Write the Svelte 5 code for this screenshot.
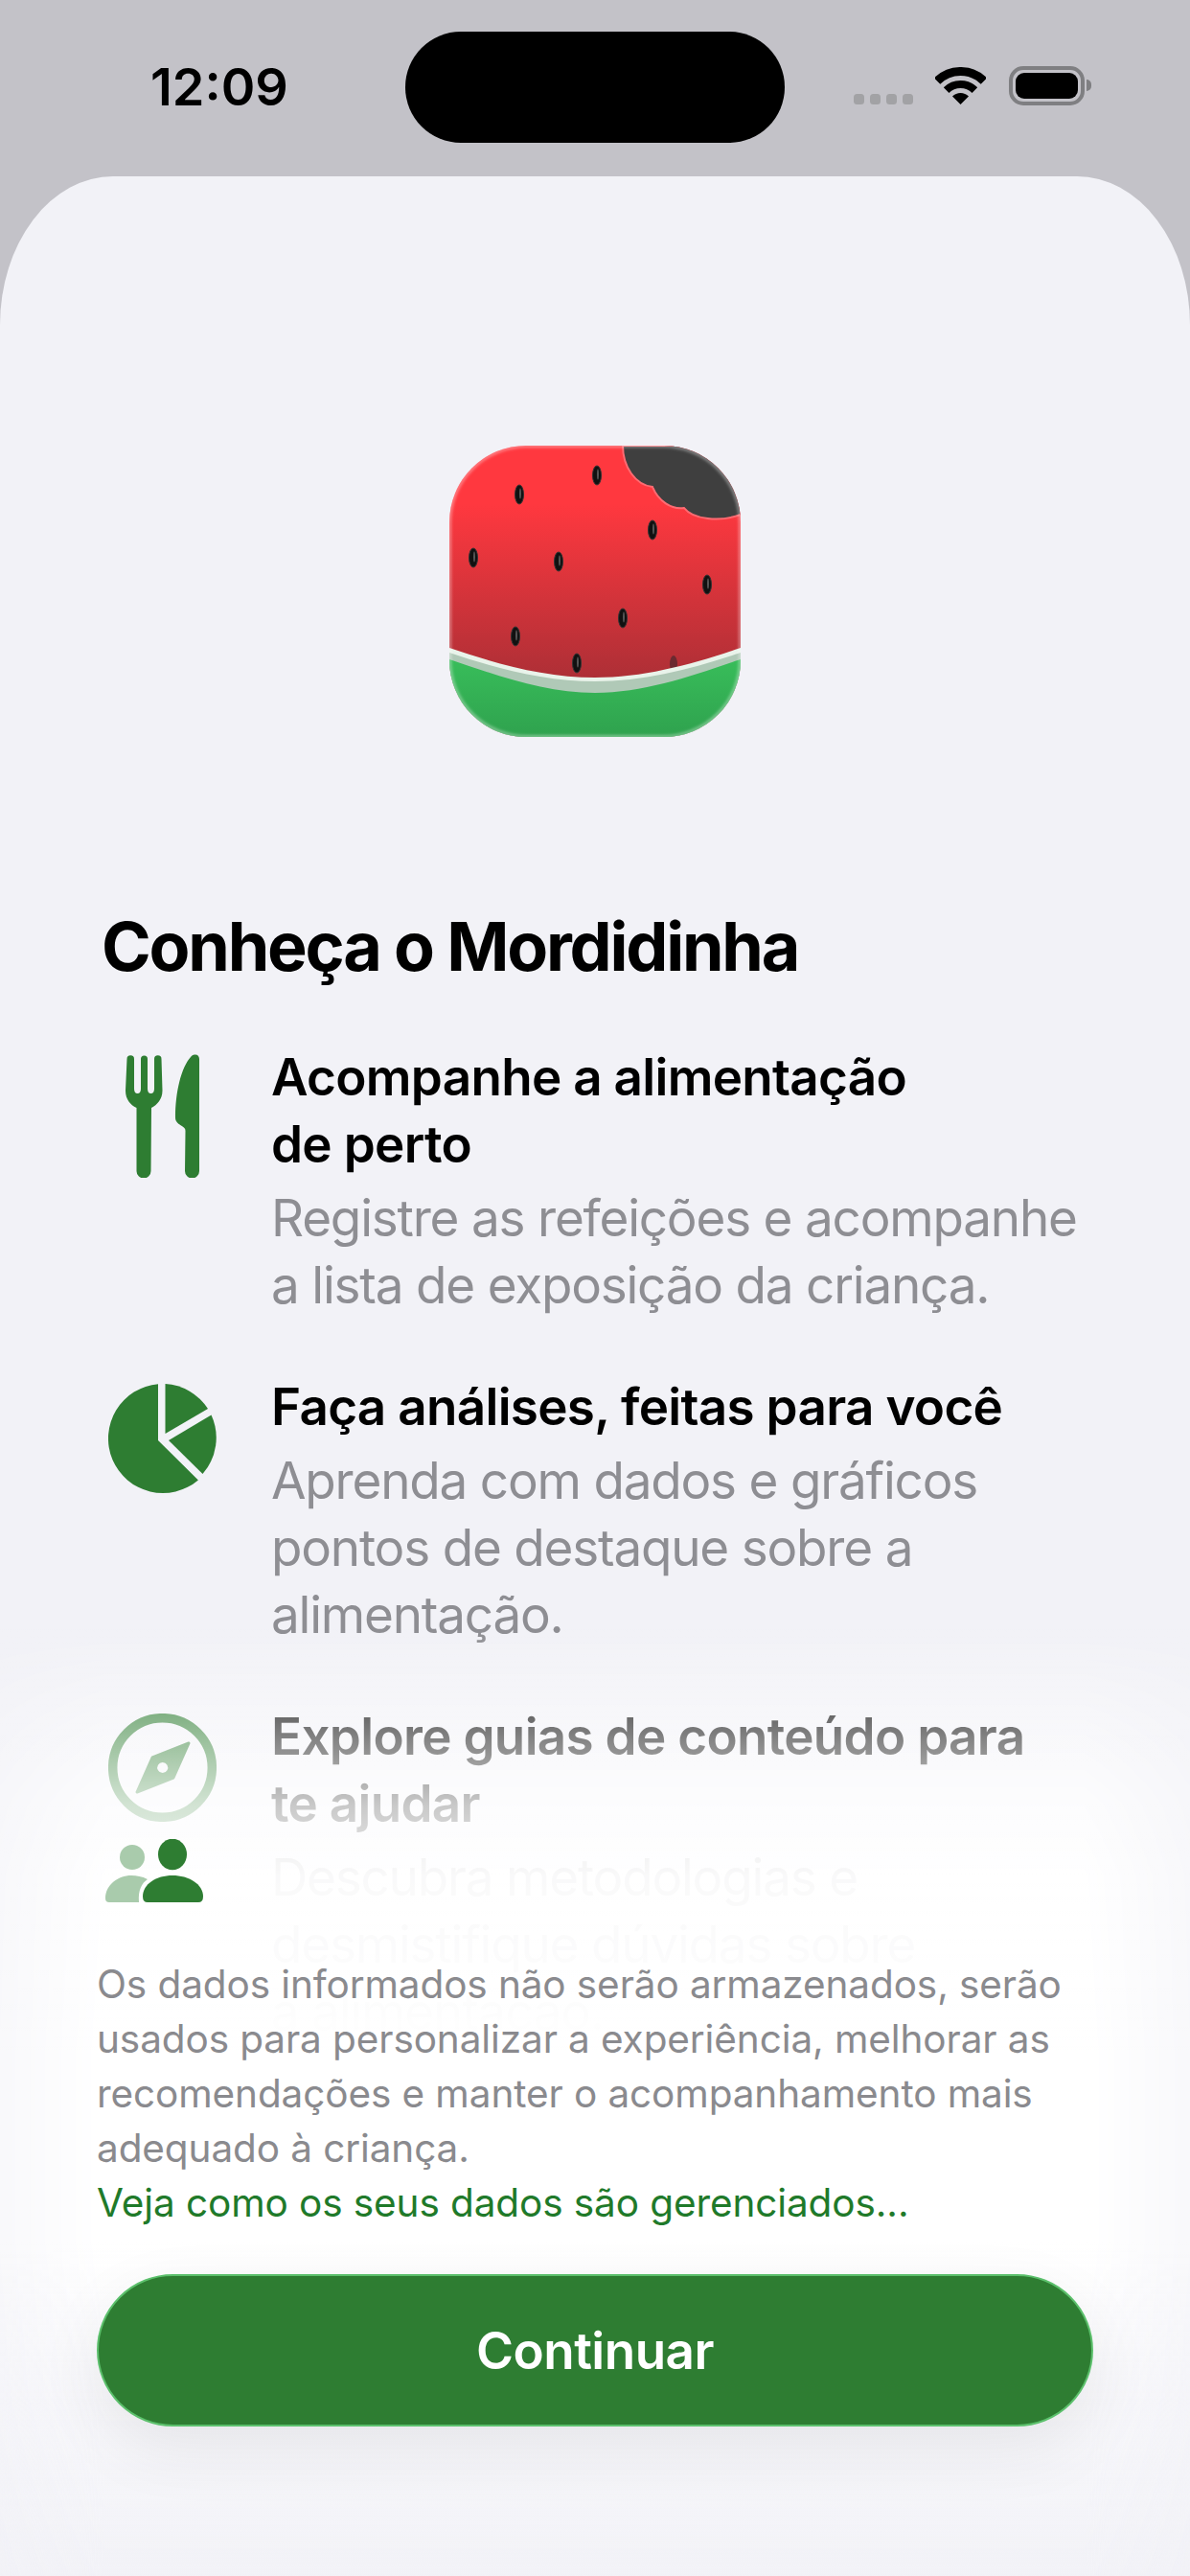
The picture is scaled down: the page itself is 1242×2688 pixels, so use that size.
<script>
  const seeds = [[154,31],[73,51],[212,88],[25,117],[114,121],[269,145],[181,180],[69,199],[133,227]];
</script>

<div class="page">
  <header class="status">
    <span class="time">12:09</span>
    <div class="sys">
      <div class="dots"><i></i><i></i><i></i><i></i></div>
      <svg class="wifi" viewBox="0 0 53 39" width="53" height="39">
        <path d="M2.1 14.6A34.5 34.5 0 0 1 50.9 14.6" fill="none" stroke="#000" stroke-width="9"/>
        <path d="M11.65 24.15A21 21 0 0 1 41.35 24.15" fill="none" stroke="#000" stroke-width="8"/>
        <path d="M26.5 39L18 30.5A12 12 0 0 1 35 30.5Z" fill="#000"/>
      </svg>
      <div class="battery"><div class="cell"></div></div>
      <div class="cap"></div>
    </div>
  </header>
  <div class="island"></div>

  <main class="sheet">
    <svg class="appicon" viewBox="0 0 304 304" width="304" height="304">
      <defs>
        <linearGradient id="red" x1="0" y1="0" x2="0" y2="1"><stop offset="0.2" stop-color="#ff383f"/><stop offset="0.8" stop-color="#ad2f36"/></linearGradient>
        <linearGradient id="grn" x1="0" y1="0" x2="0" y2="1"><stop offset="0" stop-color="#38bd5a"/><stop offset="1" stop-color="#2fa24e"/></linearGradient>
        <clipPath id="sq"><rect width="304" height="304" rx="80"/></clipPath>
        <filter id="soft" x="-10%" y="-10%" width="120%" height="120%"><feGaussianBlur stdDeviation="1.6"/></filter>
      </defs>
      <g clip-path="url(#sq)">
        <rect width="304" height="304" fill="url(#red)"/>
        <path d="M181 0C181 22 194 41 212 43C218 58 232 67 245 65C254 77 282 80 304 72V0Z" fill="#3f3f3f" stroke="#ff6b72" stroke-width="2"/>
        {#each seeds as [x, y]}
          <ellipse cx={x} cy={y} rx="4.5" ry="10" fill="#111" stroke="#333" stroke-width="1"/>
          <ellipse cx={x + 1} cy={y - 1} rx="1" ry="5.5" fill="#555"/>
        {/each}
        <ellipse cx="234" cy="228" rx="4" ry="9" fill="#6b2a30"/>
        <path d="M0 211C50 228 100 242 152 242C204 242 254 228 304 211V304H0Z" fill="#e9f3ea"/>
        <path d="M0 216C50 233 100 246 152 246C204 246 254 233 304 216V304H0Z" fill="#b0c9b7"/>
        <path d="M0 223C50 240 100 258 152 258C204 258 254 240 304 223V304H0Z" fill="url(#grn)"/>
        <rect x="0.5" y="0.5" width="303" height="303" rx="80" fill="none" stroke="#fff" stroke-opacity="0.4" stroke-width="3" filter="url(#soft)"/>
      </g>
    </svg>

    <h1>Conheça o Mordidinha</h1>

    <section class="list">
      <article class="row">
        <div class="icons">
          <svg viewBox="0 0 77 129" width="77" height="129">
            <path class="g" d="M1.5 5a3.75 3.75 0 0 1 7.5 0L9 36q0 5 3.5 5t3.5-5L16 5a3.5 3.5 0 0 1 7 0L23 36q0 5 3.5 5t3.5-5L30 5a3.75 3.75 0 0 1 7.5 0L38.5 38C38.5 47 33 53 27 56L26.5 122a7.5 7.5 0 0 1-15 0L11.5 56C5 53 0 47 0 38Z"/>
            <path class="g" d="M72 .5C75 0 77 2 77 5L77 122a7.5 7.5 0 0 1-15 0L62.5 80C62.5 77 61 76.5 58 74.5C54 72 52 70 52 66C52 40 58 14 68 3C69 1.5 70.5 .8 72 .5Z"/>
          </svg>
        </div>
        <div class="copy">
          <h2>Acompanhe a alimentação<br>de perto</h2>
          <p>Registre as refeições e acompanhe<br>a lista de exposição da criança.</p>
        </div>
      </article>

      <article class="row">
        <div class="icons">
          <svg viewBox="0 0 114 114" width="114" height="114">
            <path class="g" d="M52 .2L52 59L93.9 100.4A57 57 0 1 1 52 .2Z"/>
            <path class="g" d="M59.5 0L59.5 52L104 26A57 57 0 0 0 59.5 0Z"/>
            <path class="g" d="M107.5 32.5L63 59L98.5 94A57 57 0 0 0 107.5 32.5Z"/>
          </svg>
        </div>
        <div class="copy">
          <h2>Faça análises, feitas para você</h2>
          <p>Aprenda com dados e gráficos<br>pontos de destaque sobre a<br>alimentação.</p>
        </div>
      </article>

      <article class="row">
        <div class="icons">
          <svg viewBox="0 0 113 113" width="113" height="113">
            <circle cx="56.5" cy="56.5" r="51.8" fill="none" stroke="#2e7d32" stroke-width="9.5"/>
            <path class="g" stroke="#2e7d32" stroke-width="3" stroke-linejoin="round" fill-rule="evenodd" d="M84 31L68 67L30 82L46 46ZM56.7 49.5a7 7 0 1 0 .01 0Z"/>
          </svg>
          <svg class="people" viewBox="0 0 102 67" width="102" height="67">
            <circle cx="28" cy="19" r="13" fill="#a9cbac"/>
            <path fill="#a9cbac" d="M0 62C0 48 13 38 27 38C33 38 38 39 44 42C38 46 34 53 35 66H4Q0 66 0 62Z"/>
            <ellipse class="g" cx="70" cy="16" rx="15" ry="16.3"/>
            <path class="g" d="M39 60C39 47 53 38 70 38C87 38 102 47 102 60Q102 66 97 66H44Q39 66 39 60Z"/>
          </svg>
        </div>
        <div class="copy">
          <h2>Explore guias de conteúdo para<br>te ajudar</h2>
          <p>Descubra metodologias e<br>desmistifique dúvidas sobre<br>a alimentação.</p>
        </div>
      </article>
    </section>
  </main>

  <div class="fade"></div>

  <footer class="foot">
    <p class="note">Os dados informados não serão armazenados, serão usados para personalizar a experiência, melhorar as recomendações e manter o acompanhamento mais adequado à criança.<br><span class="link">Veja como os seus dados são gerenciados...</span></p>
    <button class="cta">Continuar</button>
  </footer>
</div>

<style>
  :global(body) { margin: 0; }
  .page {
    position: relative;
    width: 1242px;
    height: 2688px;
    overflow: hidden;
    display: flex;
    flex-direction: column;
    background: #c3c2c8;
    font-family: Inter, "Liberation Sans", sans-serif;
  }
  .status {
    height: 184px;
    flex: none;
    box-sizing: border-box;
    padding: 0 103px 0 157px;
    display: flex;
    justify-content: space-between;
    align-items: flex-start;
  }
  .time {
    margin-top: 59px;
    font-size: 54px;
    line-height: 64px;
    font-weight: 600;
    color: #000;
    letter-spacing: 0;
  }
  .sys { display: flex; align-items: flex-start; margin-top: 69px; }
  .dots { display: flex; gap: 6px; margin-top: 29px; margin-right: 23px; }
  .dots i { width: 11px; height: 11px; border-radius: 3.5px; background: #a2a2a5; }
  .wifi { margin-top: 1px; margin-right: 24px; }
  .battery {
    width: 79px;
    height: 41px;
    box-sizing: border-box;
    border: 4px solid #7f7f82;
    border-radius: 15px;
    padding: 3px;
  }
  .cell { width: 100%; height: 100%; background: #000; border-radius: 9px; }
  .cap { width: 5px; height: 12px; margin: 14px 0 0 2px; background: #7f7f82; border-radius: 0 6px 6px 0; }
  .island {
    position: absolute;
    left: 423px;
    top: 33px;
    width: 396px;
    height: 116px;
    border-radius: 58px;
    background: #000;
  }
  .sheet {
    flex: 1;
    min-height: 0;
    background: #f2f2f7;
    border-radius: 118px 118px 0 0 / 155px 155px 0 0;
    display: flex;
    flex-direction: column;
    box-sizing: border-box;
    padding: 281px 90px 0 106px;
  }
  .appicon { align-self: flex-start; margin-left: 363px; flex: none; }
  h1 {
    margin: 177px 0 0;
    font-size: 70px;
    line-height: 84px;
    font-weight: 700;
    color: #000;
    letter-spacing: -2.2px;
  }
  .list { display: flex; flex-direction: column; gap: 57px; margin-top: 59px; }
  .row { display: grid; grid-template-columns: 127px 1fr; column-gap: 50px; }
  .icons {
    padding-top: 11px;
    display: flex;
    flex-direction: column;
    align-items: center;
    gap: 18px;
  }
  .icons svg { display: block; }
  .people { position: relative; z-index: 3; margin-right: 17px; }
  .g { fill: #2e7d32; }
  h2 {
    margin: 0;
    font-size: 53px;
    line-height: 70px;
    font-weight: 600;
    color: #000;
    letter-spacing: -0.7px;
    white-space: nowrap;
  }
  .copy p {
    margin: 7px 0 0;
    font-size: 53px;
    line-height: 70px;
    font-weight: 400;
    color: #8e8e93;
    letter-spacing: -1.2px;
    white-space: nowrap;
  }
  .fade {
    position: absolute;
    z-index: 2;
    left: 0;
    right: 0;
    top: 1700px;
    bottom: 0;
    background: linear-gradient(to bottom,
      rgba(255,255,255,0) 0,
      rgba(255,255,255,.5) 111px,
      rgba(255,255,255,.78) 181px,
      rgba(255,255,255,.95) 258px,
      rgba(255,255,255,.97) 330px,
      rgba(255,255,255,.985) 400px,
      #fff 440px,
      #fff 640px,
      rgba(248,248,251,.9) 800px,
      rgba(242,242,247,.6) 988px);
    -webkit-mask-image: linear-gradient(to right, rgba(0,0,0,.5), #000 110px, #000 1132px, rgba(0,0,0,.5));
    mask-image: linear-gradient(to right, rgba(0,0,0,.5), #000 110px, #000 1132px, rgba(0,0,0,.5));
  }
  .foot {
    position: absolute;
    z-index: 4;
    left: 101px;
    right: 101px;
    top: 2042px;
    display: flex;
    flex-direction: column;
  }
  .note {
    margin: 0;
    font-size: 40.5px;
    line-height: 57px;
    color: #8a8a8e;
    letter-spacing: -0.1px;
  }
  .link { color: #1f7a2a; }
  .cta {
    margin-top: 46px;
    height: 159px;
    border: 2.5px solid #5cc06c;
    border-radius: 80px;
    background: #2e7d32;
    color: #fff;
    font: 600 53px Inter, "Liberation Sans", sans-serif;
    letter-spacing: -0.5px;
    box-shadow: 0 24px 70px rgba(0,0,0,.07);
    padding: 0;
  }
</style>
